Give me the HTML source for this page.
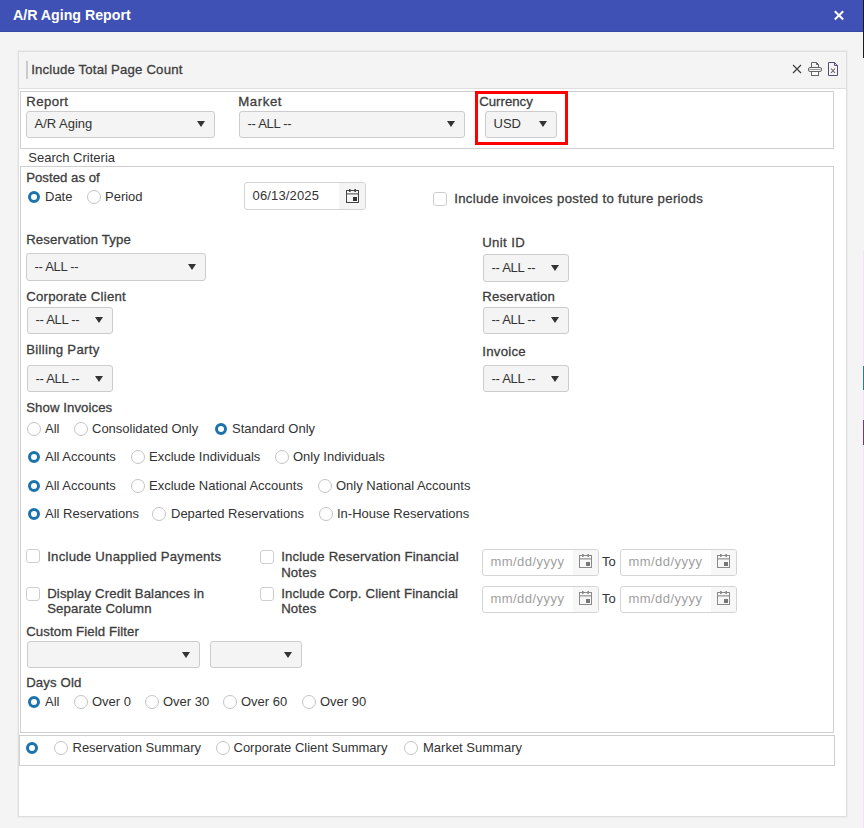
<!DOCTYPE html>
<html><head><meta charset="utf-8">
<style>
*{box-sizing:border-box;margin:0;padding:0}
html,body{width:864px;height:828px;overflow:hidden;background:#f4f4f4;font-family:"Liberation Sans",sans-serif;color:#333;font-size:13px}
.a{position:absolute}
.t{position:absolute;white-space:nowrap;line-height:16px;font-size:13px;color:#333}
.b{font-size:13.2px;color:#3d3d3d;-webkit-text-stroke:0.3px #3d3d3d}
.sel{position:absolute;background:#f4f4f4;border:1px solid #ccc;border-radius:3px}
.sel span{position:absolute;left:7.5px;top:4px;line-height:16px;font-size:13px;color:#333;white-space:nowrap}
.sel i{position:absolute;top:9px;width:0;height:0;border-left:4px solid transparent;border-right:4px solid transparent;border-top:6px solid #333}
.r{position:absolute;width:14px;height:14px;border:1px solid #c4c4c4;border-radius:50%;background:#fff}
.rs{position:absolute;width:12px;height:12px;border:3px solid #1b73ae;border-radius:50%;background:#fff}
.cb{position:absolute;width:14px;height:14px;border:1px solid #cfcfcf;border-radius:3px;background:#fff}
.box{position:absolute;border:1px solid #cfcfcf;background:#fff}
.di{position:absolute;border:1px solid #d4d4d4;border-radius:3px;background:#fff}
.rc{position:absolute;left:863px;width:1px}
</style></head><body>
<div class="a" style="left:0;top:0;width:864px;height:32px;background:#3f51b5;border-bottom:1px solid #3647a6"></div>
<div class="t" style="left:13px;top:7px;font-weight:bold;font-size:14.2px;color:#fff;line-height:17px">A/R Aging Report</div>
<svg class="a" style="left:833px;top:10px" width="12" height="11" viewBox="0 0 12 11"><path d="M1.8 1.3 L10.2 9.5 M10.2 1.3 L1.8 9.5" stroke="#fff" stroke-width="2"/></svg>
<div class="rc" style="top:0;height:58px;background:#1e1a20;z-index:5"></div>
<div class="rc" style="top:250px;height:578px;background:#f2e4f2"></div>
<div class="rc" style="top:366px;height:24px;background:#2e7d78"></div>
<div class="rc" style="top:420px;height:25px;background:#6a3a8a"></div>
<div class="a" style="left:18px;top:51px;width:829px;height:766px;border:1px solid #dedede;background:#fff;box-shadow:0 0 0 1px #ececec"></div>
<div class="a" style="left:19px;top:52px;width:827px;height:37px;background:#f4f4f4;border-bottom:1px solid #dedede"></div>
<div class="a" style="left:26px;top:61px;width:2px;height:18px;background:#cbcbcb"></div>
<div class="t b" style="left:31.2px;top:62px;letter-spacing:0.174px;">Include Total Page Count</div>
<svg class="a" style="left:792px;top:64px" width="10" height="10" viewBox="0 0 10 10"><path d="M1 1 L9 9 M9 1 L1 9" stroke="#3a3a3a" stroke-width="1.1"/></svg>
<svg class="a" style="left:807px;top:61px" width="16" height="16" viewBox="0 0 16 16" fill="none" stroke="#666" stroke-width="1">
<path d="M4.5 6 V1.5 H9.5 L11.5 3.5 V6"/><path d="M9.5 1.5 V3.5 H11.5" fill="#555"/>
<rect x="1.5" y="6.5" width="13" height="4" rx="1.5"/><rect x="4.5" y="10.5" width="7" height="4" fill="#fff"/><path d="M2.5 8.5 H13.5" stroke="#999"/></svg>
<svg class="a" style="left:827px;top:61px" width="12" height="16" viewBox="0 0 12 16" fill="none" stroke="#5a4a7a" stroke-width="1">
<path d="M1.5 1.5 H7.5 L10.5 4.5 V14.5 H1.5 Z"/><path d="M7.5 1.5 V4.5 H10.5"/><path d="M4 7.5 L8 12 M8 7.5 L4 12" stroke="#666" stroke-width="1.1"/></svg>
<div class="box" style="left:20px;top:91px;width:814px;height:58px"></div>
<div class="t b" style="left:26.2px;top:94px;letter-spacing:0.45px;">Report</div>
<div class="sel" style="left:26px;top:111px;width:189px;height:27px"><span style="top:4px">A/R Aging</span><i style="left:170px;top:9px"></i></div>
<div class="t b" style="left:238.2px;top:94px;letter-spacing:0.6px;">Market</div>
<div class="sel" style="left:239px;top:111px;width:226px;height:27px"><span style="top:4px;letter-spacing:-0.3px">-- ALL --</span><i style="left:207px;top:9px"></i></div>
<div class="a" style="left:475px;top:91px;width:93px;height:54px;border:3px solid #f00"></div>
<div class="t b" style="left:479.2px;top:94px;letter-spacing:0.014px;">Currency</div>
<div class="sel" style="left:485px;top:111px;width:72px;height:27px"><span style="top:4px">USD</span><i style="left:53px;top:9px"></i></div>
<div class="t" style="left:28.3px;top:150px;">Search Criteria</div>
<div class="box" style="left:20px;top:166px;width:814px;height:567px"></div>
<div class="t b" style="left:26.2px;top:170px;letter-spacing:0.023px;">Posted as of</div>
<div class="rs" style="left:28px;top:191px"></div>
<div class="t" style="left:45px;top:189px;">Date</div>
<div class="r" style="left:87px;top:190px"></div>
<div class="t" style="left:105px;top:189px;">Period</div>
<div class="di" style="left:244px;top:182px;width:122px;height:28px"></div>
<div class="a" style="left:339px;top:183px;width:26px;height:26px;background:#f4f4f4;border-radius:0 2px 2px 0"></div>
<div class="t" style="left:252.5px;top:188px;letter-spacing:0.15px">06/13/2025</div>
<svg class="a" style="left:346px;top:189px" width="13" height="14" viewBox="0 0 13 14"><rect x="0.5" y="1.5" width="12" height="12" fill="none" stroke="#444"/><rect x="1" y="4" width="11" height="1.6" fill="#888"/><rect x="7" y="8" width="4" height="4" fill="#333"/><rect x="3" y="0" width="1.6" height="3" fill="#444"/><rect x="8.4" y="0" width="1.6" height="3" fill="#444"/></svg>
<div class="cb" style="left:433px;top:192px"></div>
<div class="t b" style="left:454.2px;top:191px;letter-spacing:0.312px;">Include invoices posted to future periods</div>
<div class="t b" style="left:26.2px;top:232px;letter-spacing:0.15px;">Reservation Type</div>
<div class="sel" style="left:26px;top:253px;width:180px;height:28px"><span style="top:5px;letter-spacing:-0.3px">-- ALL --</span><i style="left:161px;top:10px"></i></div>
<div class="t b" style="left:482.2px;top:235px;letter-spacing:0.367px;">Unit ID</div>
<div class="sel" style="left:483px;top:254px;width:86px;height:28px"><span style="top:5px;letter-spacing:-0.3px">-- ALL --</span><i style="left:67px;top:10px"></i></div>
<div class="t b" style="left:26.2px;top:289px;letter-spacing:0.233px;">Corporate Client</div>
<div class="sel" style="left:27px;top:307px;width:86px;height:27px"><span style="top:4px;letter-spacing:-0.3px">-- ALL --</span><i style="left:67px;top:9px"></i></div>
<div class="t b" style="left:482.2px;top:289px;letter-spacing:0.24px;">Reservation</div>
<div class="sel" style="left:483px;top:307px;width:86px;height:27px"><span style="top:4px;letter-spacing:-0.3px">-- ALL --</span><i style="left:67px;top:9px"></i></div>
<div class="t b" style="left:26.2px;top:342px;letter-spacing:0.292px;">Billing Party</div>
<div class="sel" style="left:27px;top:365px;width:86px;height:27px"><span style="top:5px;letter-spacing:-0.3px">-- ALL --</span><i style="left:67px;top:10px"></i></div>
<div class="t b" style="left:482.2px;top:344px;letter-spacing:0.283px;">Invoice</div>
<div class="sel" style="left:483px;top:365px;width:86px;height:27px"><span style="top:5px;letter-spacing:-0.3px">-- ALL --</span><i style="left:67px;top:10px"></i></div>
<div class="t b" style="left:26.2px;top:400px;letter-spacing:0.083px;">Show Invoices</div>
<div class="r" style="left:27px;top:422px"></div>
<div class="t" style="left:45px;top:421px;">All</div>
<div class="r" style="left:74px;top:422px"></div>
<div class="t" style="left:92px;top:421px;">Consolidated Only</div>
<div class="rs" style="left:215px;top:423px"></div>
<div class="t" style="left:232px;top:421px;">Standard Only</div>
<div class="rs" style="left:28px;top:451px"></div>
<div class="t" style="left:45px;top:449px;">All Accounts</div>
<div class="r" style="left:131px;top:450px"></div>
<div class="t" style="left:149px;top:449px;">Exclude Individuals</div>
<div class="r" style="left:275px;top:450px"></div>
<div class="t" style="left:293px;top:449px;">Only Individuals</div>
<div class="rs" style="left:28px;top:480px"></div>
<div class="t" style="left:45px;top:478px;">All Accounts</div>
<div class="r" style="left:131px;top:479px"></div>
<div class="t" style="left:149px;top:478px;">Exclude National Accounts</div>
<div class="r" style="left:318px;top:479px"></div>
<div class="t" style="left:336px;top:478px;">Only National Accounts</div>
<div class="rs" style="left:28px;top:508px"></div>
<div class="t" style="left:45px;top:506px;">All Reservations</div>
<div class="r" style="left:152px;top:507px"></div>
<div class="t" style="left:171px;top:506px;">Departed Reservations</div>
<div class="r" style="left:319px;top:507px"></div>
<div class="t" style="left:337px;top:506px;">In-House Reservations</div>
<div class="cb" style="left:26px;top:549px"></div>
<div class="t b" style="left:47.2px;top:549px;letter-spacing:0.24px;">Include Unapplied Payments</div>
<div class="cb" style="left:260px;top:550px"></div>
<div class="t b" style="left:281.2px;top:549px;letter-spacing:0.157px;">Include Reservation Financial<br>Notes</div>
<div class="cb" style="left:26px;top:587px"></div>
<div class="t b" style="left:47.2px;top:586px;letter-spacing:0.12px;line-height:15px">Display Credit Balances in<br>Separate Column</div>
<div class="cb" style="left:260px;top:587px"></div>
<div class="t b" style="left:281.2px;top:586px;letter-spacing:0.159px;line-height:15px">Include Corp. Client Financial<br>Notes</div>
<div class="di" style="left:482px;top:549px;width:117px;height:27px"></div>
<div class="a" style="left:573px;top:550px;width:25px;height:25px;background:#f7f7f7;border-radius:0 2px 2px 0"></div>
<div class="t" style="left:490.5px;top:554px;color:#a0a0a0;letter-spacing:0.45px">mm/dd/yyyy</div>
<svg class="a" style="left:579px;top:554px" width="13" height="14" viewBox="0 0 13 14"><rect x="0.5" y="1.5" width="12" height="12" fill="none" stroke="#8a8a8a"/><rect x="1" y="4" width="11" height="1.6" fill="#aaa"/><rect x="7" y="8" width="4" height="4" fill="#777"/><rect x="3" y="0" width="1.6" height="3" fill="#8a8a8a"/><rect x="8.4" y="0" width="1.6" height="3" fill="#8a8a8a"/></svg>
<div class="t" style="left:602px;top:554px;">To</div>
<div class="di" style="left:620px;top:549px;width:117px;height:27px"></div>
<div class="a" style="left:711px;top:550px;width:25px;height:25px;background:#f7f7f7;border-radius:0 2px 2px 0"></div>
<div class="t" style="left:628.5px;top:554px;color:#a0a0a0;letter-spacing:0.45px">mm/dd/yyyy</div>
<svg class="a" style="left:717px;top:554px" width="13" height="14" viewBox="0 0 13 14"><rect x="0.5" y="1.5" width="12" height="12" fill="none" stroke="#8a8a8a"/><rect x="1" y="4" width="11" height="1.6" fill="#aaa"/><rect x="7" y="8" width="4" height="4" fill="#777"/><rect x="3" y="0" width="1.6" height="3" fill="#8a8a8a"/><rect x="8.4" y="0" width="1.6" height="3" fill="#8a8a8a"/></svg>
<div class="di" style="left:482px;top:586px;width:117px;height:27px"></div>
<div class="a" style="left:573px;top:587px;width:25px;height:25px;background:#f7f7f7;border-radius:0 2px 2px 0"></div>
<div class="t" style="left:490.5px;top:591px;color:#a0a0a0;letter-spacing:0.45px">mm/dd/yyyy</div>
<svg class="a" style="left:579px;top:591px" width="13" height="14" viewBox="0 0 13 14"><rect x="0.5" y="1.5" width="12" height="12" fill="none" stroke="#8a8a8a"/><rect x="1" y="4" width="11" height="1.6" fill="#aaa"/><rect x="7" y="8" width="4" height="4" fill="#777"/><rect x="3" y="0" width="1.6" height="3" fill="#8a8a8a"/><rect x="8.4" y="0" width="1.6" height="3" fill="#8a8a8a"/></svg>
<div class="t" style="left:602px;top:591px;">To</div>
<div class="di" style="left:620px;top:586px;width:117px;height:27px"></div>
<div class="a" style="left:711px;top:587px;width:25px;height:25px;background:#f7f7f7;border-radius:0 2px 2px 0"></div>
<div class="t" style="left:628.5px;top:591px;color:#a0a0a0;letter-spacing:0.45px">mm/dd/yyyy</div>
<svg class="a" style="left:717px;top:591px" width="13" height="14" viewBox="0 0 13 14"><rect x="0.5" y="1.5" width="12" height="12" fill="none" stroke="#8a8a8a"/><rect x="1" y="4" width="11" height="1.6" fill="#aaa"/><rect x="7" y="8" width="4" height="4" fill="#777"/><rect x="3" y="0" width="1.6" height="3" fill="#8a8a8a"/><rect x="8.4" y="0" width="1.6" height="3" fill="#8a8a8a"/></svg>
<div class="t b" style="left:26.2px;top:624px;letter-spacing:0.111px;">Custom Field Filter</div>
<div class="sel" style="left:27px;top:641px;width:173px;height:27px"><i style="left:154px;top:10px"></i></div>
<div class="sel" style="left:210px;top:641px;width:92px;height:27px"><i style="left:73px;top:10px"></i></div>
<div class="t b" style="left:26.2px;top:675px;letter-spacing:0.143px;">Days Old</div>
<div class="rs" style="left:28px;top:696px"></div>
<div class="t" style="left:45px;top:694px;">All</div>
<div class="r" style="left:74px;top:695px"></div>
<div class="t" style="left:92px;top:694px;">Over 0</div>
<div class="r" style="left:145px;top:695px"></div>
<div class="t" style="left:163px;top:694px;">Over 30</div>
<div class="r" style="left:223px;top:695px"></div>
<div class="t" style="left:241px;top:694px;">Over 60</div>
<div class="r" style="left:302px;top:695px"></div>
<div class="t" style="left:320px;top:694px;">Over 90</div>
<div class="box" style="left:19px;top:735px;width:816px;height:31px"></div>
<div class="rs" style="left:26px;top:742px"></div>
<div class="r" style="left:54px;top:741px"></div>
<div class="t" style="left:72.5px;top:740px;">Reservation Summary</div>
<div class="r" style="left:216px;top:741px"></div>
<div class="t" style="left:233.5px;top:740px;">Corporate Client Summary</div>
<div class="r" style="left:404px;top:741px"></div>
<div class="t" style="left:423px;top:740px;">Market Summary</div>
</body></html>
